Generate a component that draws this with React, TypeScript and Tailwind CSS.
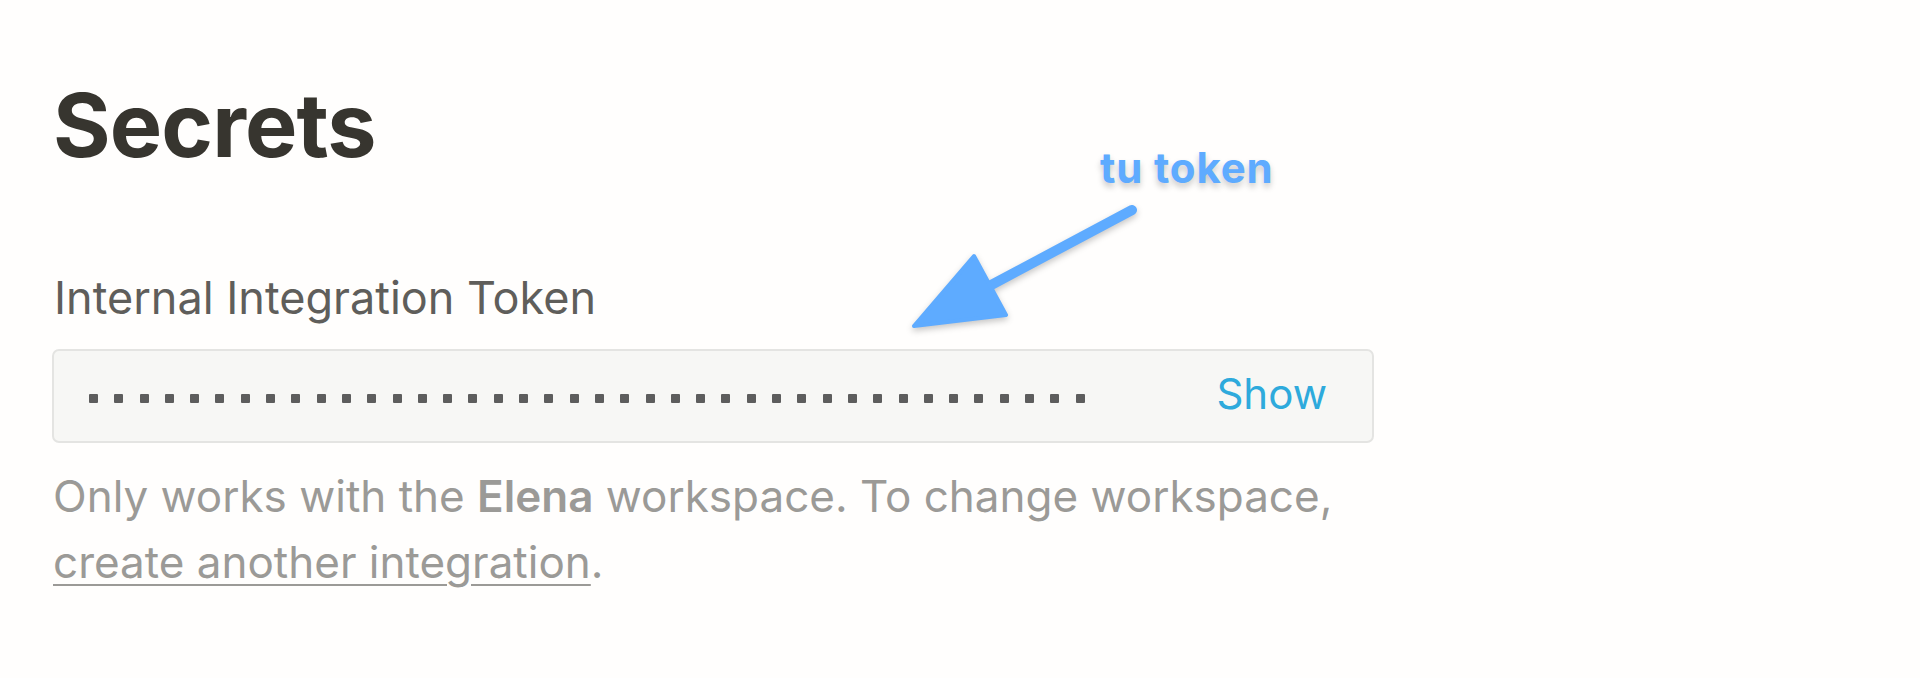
import React from "react";

/* Notion-style "Secrets" settings block with an annotation arrow */

const DOTS = Array.from({ length: 40 }, (_, i) => i);

function Arrow() {
  return (
    <svg
      className="absolute left-[900px] top-[190px] drop-shadow-[0_3px_3px_rgba(0,0,0,0.22)]"
      width={260}
      height={150}
      viewBox="0 0 260 150"
    >
      <line x1={232} y1={20} x2={80} y2={101} stroke="#5eabff" strokeWidth={10} strokeLinecap="round" />
      <polygon
        points="14,136 74,66 106,125"
        fill="#5eabff"
        stroke="#5eabff"
        strokeWidth={4}
        strokeLinejoin="round"
      />
    </svg>
  );
}

export default function App() {
  return (
    <div
      className="relative w-full h-[678px] bg-[#fffefd] overflow-hidden"
      style={{ fontFamily: "Inter, 'Noto Sans', sans-serif" }}
    >
      <div className="w-[1322px] ml-[52px] pt-[73px]">
        <h1 className="text-[88px] leading-[1.2] font-bold tracking-[-0.01em] text-[#37352f] pl-[1px]">
          Secrets
        </h1>

        <div className="mt-[86px] text-[45px] leading-[66px] text-[#5f5e5b] pl-[2px]">
          Internal Integration Token
        </div>

        {/* masked token field */}
        <div className="mt-[18px] h-[94px] flex items-center justify-between rounded-[7px] border-2 border-[#e4e4e2] bg-[#f7f7f5] pl-[35px] pr-[45px]">
          <div className="flex items-center gap-[16.3px] mt-[6px]">
            {DOTS.map((d) => (
              <span key={d} className="w-[9px] h-[9px] rounded-[1px] bg-[#5d5d5d]" />
            ))}
          </div>
          <button className="text-[42px] leading-none text-[#2eaadc] pb-[4px]">Show</button>
        </div>

        <p className="mt-[20px] text-[44px] leading-[66px] text-[#9b9a97] pl-[1px]">
          Only works with the <span className="font-semibold">Elena</span> workspace. To change workspace,{" "}
          <a className="underline decoration-2 underline-offset-[6px]">create another integration</a>.
        </p>
      </div>

      {/* annotation */}
      <div className="absolute left-[1100px] top-[147px] text-[42px] leading-none font-bold tracking-[0.02em] text-[#5eabff] [text-shadow:0_4px_6px_rgba(0,0,0,0.22)]">
        tu token
      </div>
      <Arrow />
    </div>
  );
}
